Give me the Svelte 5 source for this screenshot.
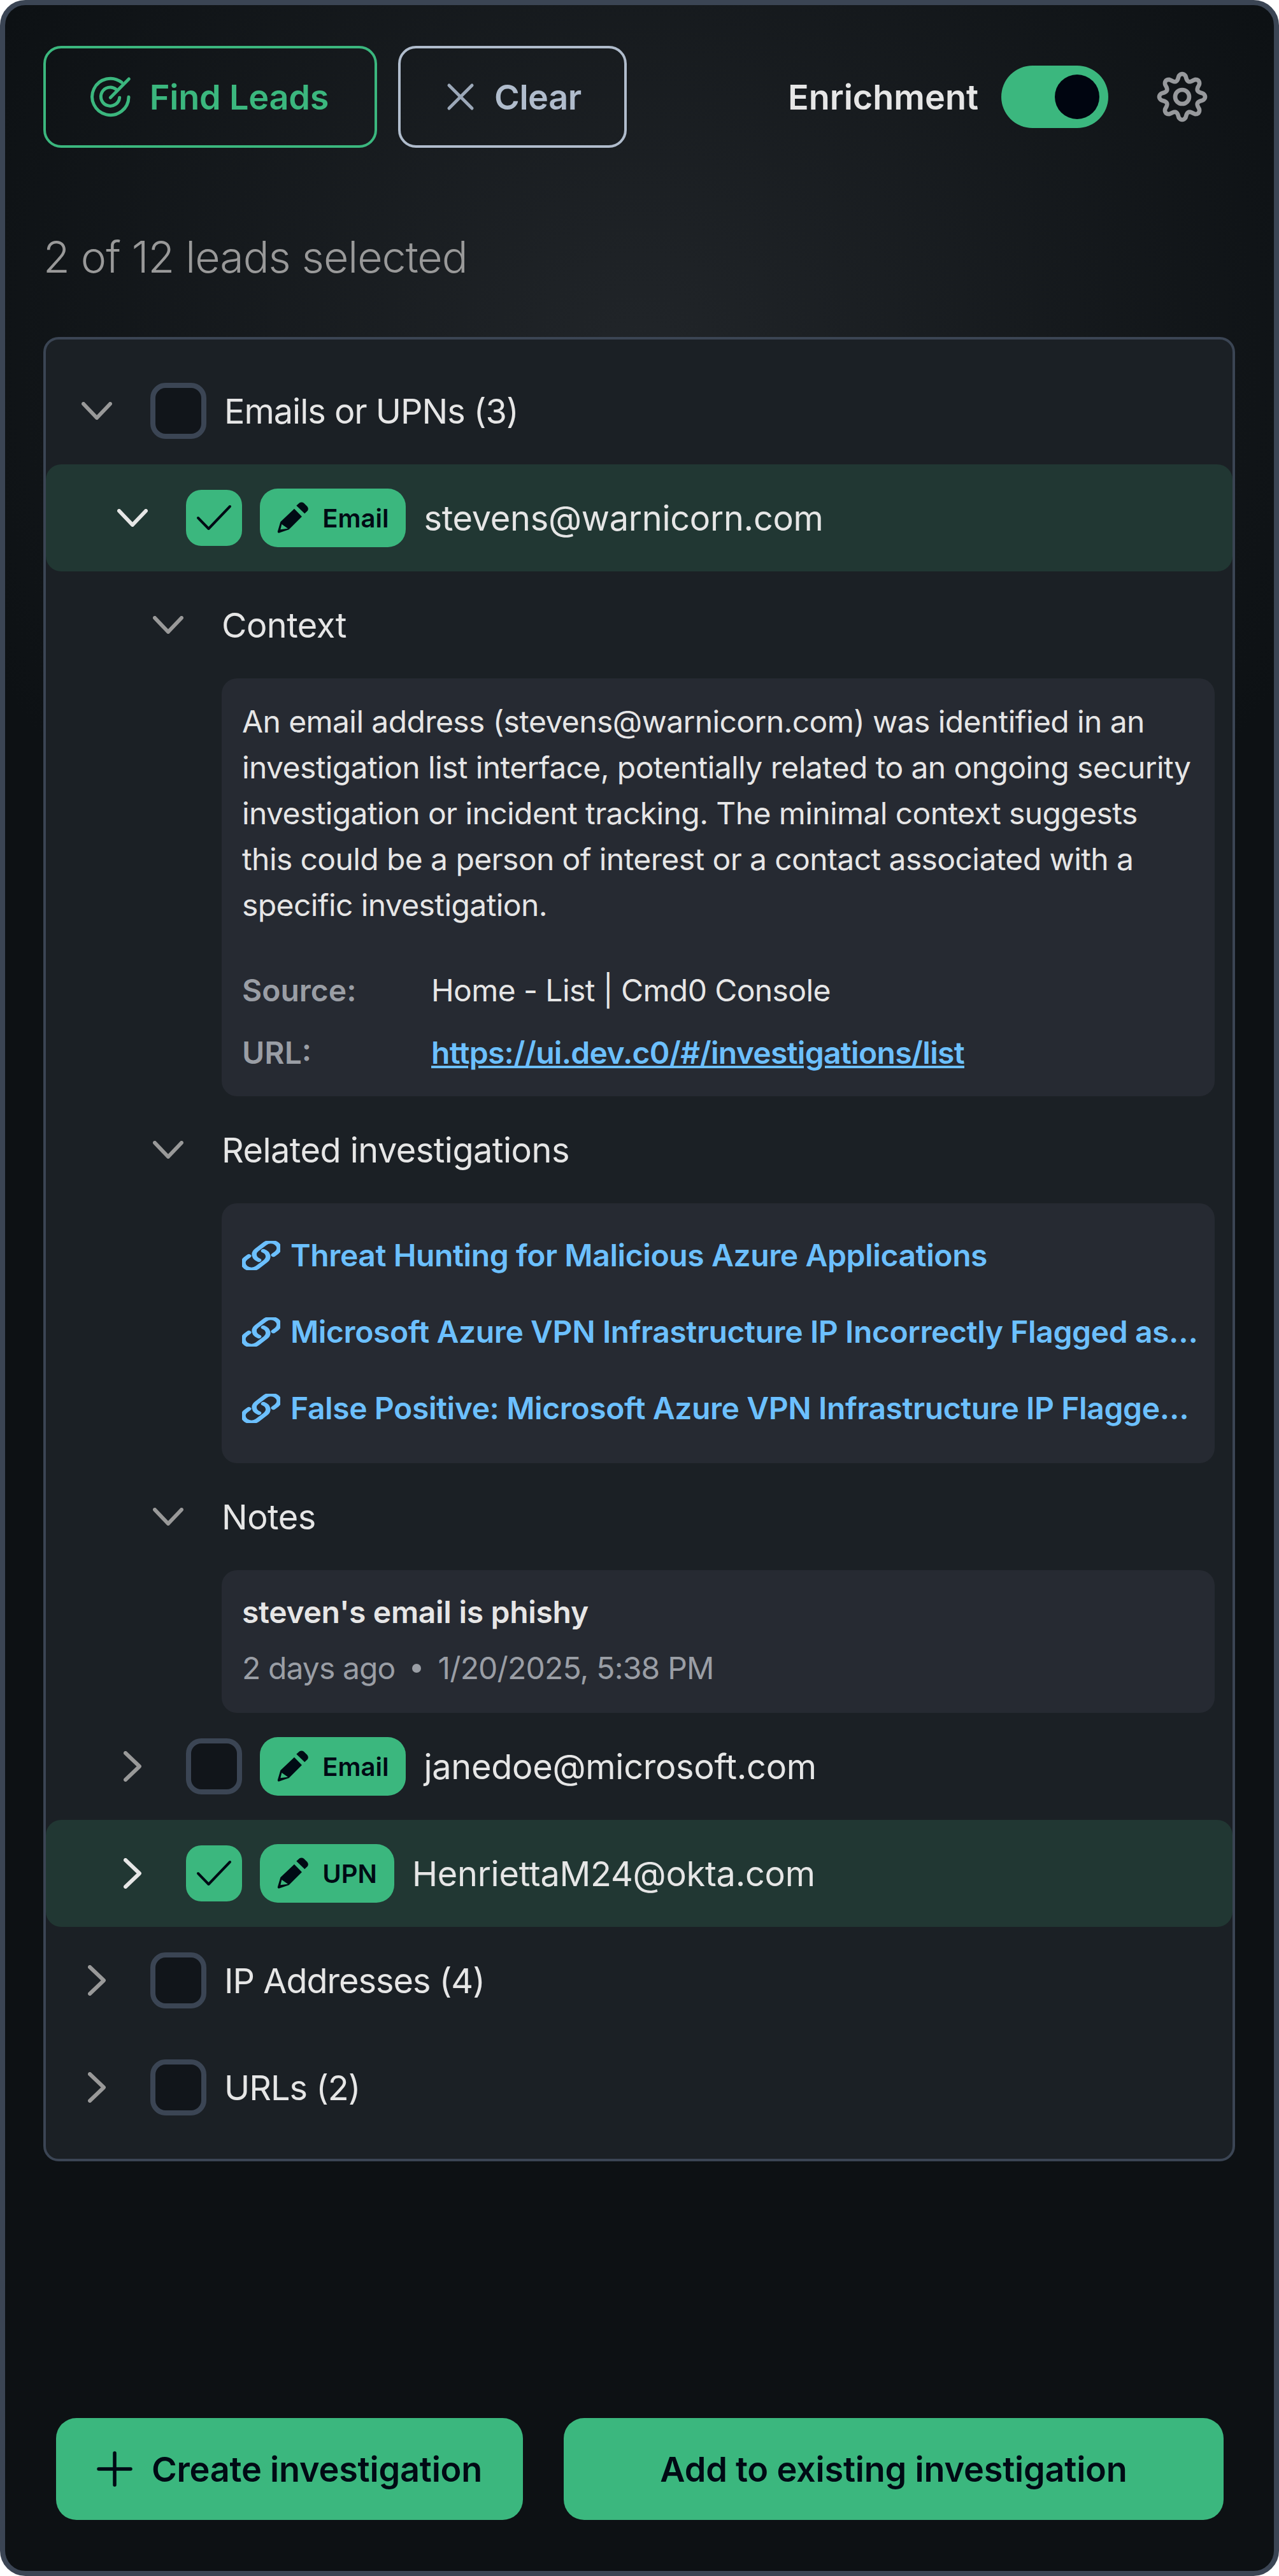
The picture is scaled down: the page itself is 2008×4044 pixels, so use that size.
<script>
  const links = [
    "Threat Hunting for Malicious Azure Applications",
    "Microsoft Azure VPN Infrastructure IP Incorrectly Flagged as Malicious",
    "False Positive: Microsoft Azure VPN Infrastructure IP Flagged as Suspicious"
  ];

  // gear outline: 8 rounded teeth around the centre
  function gearPath() {
    const pts = [];
    for (let i = 0; i < 160; i++) {
      const a = (i / 160) * Math.PI * 2;
      const c = Math.cos(a * 8);
      const shaped = Math.sign(c) * Math.pow(Math.abs(c), 0.7);
      const r = 93 + 15 * shaped;
      pts.push((138 + r * Math.cos(a)).toFixed(1) + " " + (138 + r * Math.sin(a)).toFixed(1));
    }
    return "M" + pts.join("L") + "Z";
  }
  const gear = gearPath();
</script>

{#snippet chevronDown()}
  <span class="chev">
    <svg width="48" height="28" viewBox="0 0 48 28" fill="none" stroke="currentColor" stroke-width="6" stroke-linecap="round" stroke-linejoin="round">
      <path d="M3 3 L24 25 L45 3" />
    </svg>
  </span>
{/snippet}

{#snippet chevronRight()}
  <span class="chev">
    <svg width="28" height="48" viewBox="0 0 28 48" fill="none" stroke="currentColor" stroke-width="6" stroke-linecap="round" stroke-linejoin="round">
      <path d="M3 3 L25 24 L3 45" />
    </svg>
  </span>
{/snippet}

{#snippet checkbox(checked)}
  <span class="box" class:checked>
    {#if checked}
      <svg width="88" height="88" viewBox="0 0 88 88" fill="none" stroke="#000a14" stroke-width="4" stroke-linecap="round" stroke-linejoin="round">
        <path d="M19 44 L35.5 61 L69 26" />
      </svg>
    {/if}
  </span>
{/snippet}

{#snippet badge(label)}
  <span class="badge">
    <svg width="53.3" height="53.3" viewBox="100 105 160 160" fill="#000a14" fill-rule="evenodd">
      <path d="M197 128 L212 115 Q222 110 232 116 L248 132 Q256 142 250 152 L236 166 Z" />
      <path d="M187 143 L223 180 L162 241 L114 257 Q107 256 109 249 L122 205 Z M128 216 L157 236 L122 241 Z" />
    </svg>
    {label}
  </span>
{/snippet}

{#snippet link()}
  <svg class="link-icon" width="60" height="46" viewBox="1.6 1.6 20.8 20.8" preserveAspectRatio="none" fill="none" stroke="currentColor" stroke-width="2.6" stroke-linecap="round" stroke-linejoin="round">
    <path d="M13.19 8.688a4.5 4.5 0 011.242 7.244l-4.5 4.5a4.5 4.5 0 01-6.364-6.364l1.757-1.757m13.35-.622l1.757-1.757a4.5 4.5 0 00-6.364-6.364l-4.5 4.5a4.5 4.5 0 001.242 7.244" />
  </svg>
{/snippet}

<div class="frame">
  <header class="toolbar">
    <button class="btn find">
      <svg width="66.7" height="66.7" viewBox="30 55 200 200" fill="none" stroke="currentColor" stroke-width="15" stroke-linecap="round">
        <path d="M183 86 A86 86 0 1 0 216 155" />
        <path d="M156 118 A44 44 0 1 0 173 158" />
        <path d="M130 158 L217 70" />
      </svg>
      Find Leads
    </button>
    <button class="btn clear">
      <svg width="56" height="56" viewBox="0 0 56 56" fill="none" stroke="#9ca8b8" stroke-width="5" stroke-linecap="round">
        <path d="M10 10 L46 46 M46 10 L10 46" />
      </svg>
      Clear
    </button>
    <span class="enrich">Enrichment</span>
    <span class="toggle"><span class="knob"></span></span>
    <svg class="gear" width="80" height="80" viewBox="18 18 240 240" fill="none" stroke="#97999c" stroke-width="20" stroke-linejoin="round">
      <path d={gear} />
      <circle cx="138" cy="138" r="33" />
    </svg>
  </header>

  <p class="count">2 of 12 leads selected</p>

  <section class="panel">
    <div class="row group">
      {@render chevronDown()}
      {@render checkbox(false)}
      <span class="label">Emails or UPNs (3)</span>
    </div>

    <div class="row lead selected">
      {@render chevronDown()}
      {@render checkbox(true)}
      {@render badge("Email")}
      <span class="label">stevens@warnicorn.com</span>
    </div>

    <div class="row sub">
      {@render chevronDown()}
      <span class="label">Context</span>
    </div>
    <div class="card context">
      <p class="desc">An email address (stevens@warnicorn.com) was identified in an investigation list interface, potentially related to an ongoing security investigation or incident tracking. The minimal context suggests this could be a person of interest or a contact associated with a specific investigation.</p>
      <div class="meta-row"><span class="key">Source:</span><span>Home - List | Cmd0 Console</span></div>
      <div class="meta-row"><span class="key">URL:</span><a class="url" href="#list">https://ui.dev.c0/#/investigations/list</a></div>
    </div>

    <div class="row sub">
      {@render chevronDown()}
      <span class="label">Related investigations</span>
    </div>
    <div class="card related">
      {#each links as title}
        <div class="related-item">
          {@render link()}
          <span class="related-title">{title}</span>
        </div>
      {/each}
    </div>

    <div class="row sub">
      {@render chevronDown()}
      <span class="label">Notes</span>
    </div>
    <div class="card notes">
      <div class="note">steven's email is phishy</div>
      <div class="note-meta"><span class="ago">2 days ago</span><span class="dot"></span><span class="date">1/20/2025, 5:38 PM</span></div>
    </div>

    <div class="row lead">
      {@render chevronRight()}
      {@render checkbox(false)}
      {@render badge("Email")}
      <span class="label">janedoe@microsoft.com</span>
    </div>

    <div class="row lead selected">
      {@render chevronRight()}
      {@render checkbox(true)}
      {@render badge("UPN")}
      <span class="label">HenriettaM24@okta.com</span>
    </div>

    <div class="row group">
      {@render chevronRight()}
      {@render checkbox(false)}
      <span class="label">IP Addresses (4)</span>
    </div>

    <div class="row group">
      {@render chevronRight()}
      {@render checkbox(false)}
      <span class="label">URLs (2)</span>
    </div>
  </section>

  <footer class="actions">
    <button class="primary create">
      <svg width="56" height="56" viewBox="0 0 56 56" fill="none" stroke="#000a14" stroke-width="5.5" stroke-linecap="round">
        <path d="M28 3 L28 53 M3 28 L53 28" />
      </svg>
      Create investigation
    </button>
    <button class="primary add">Add to existing investigation</button>
  </footer>
</div>

<style>
  :global(body) {
    background: #fff;
  }

  .frame {
    box-sizing: border-box;
    width: 2008px;
    height: 4044px;
    display: flex;
    flex-direction: column;
    border: 8px solid #3b4554;
    border-radius: 40px;
    background: radial-gradient(ellipse 1150px 1050px at 50% 550px, #212529 0%, #0d1114 100%);
    font-family: Inter, "Liberation Sans", sans-serif;
    font-size: 54px;
    color: #e6e6e6;
  }

  /* ===== TOOLBAR ===== */
  .toolbar {
    display: flex;
    align-items: center;
    padding: 64px 104px 0 60px;
  }

  button {
    font-family: inherit;
    font-size: 54px;
    font-weight: 600;
    letter-spacing: -0.2px;
    cursor: pointer;
  }

  .btn {
    box-sizing: border-box;
    height: 160px;
    display: flex;
    align-items: center;
    background: transparent;
    border-width: 4px;
    border-style: solid;
    border-radius: 28px;
  }

  .find {
    width: 524px;
    padding: 0 0 0 68px;
    gap: 28px;
    color: #3bb77e;
    border-color: #3bb77e;
  }

  .clear {
    width: 359px;
    margin-left: 33px;
    padding: 0 0 0 66px;
    gap: 25px;
    letter-spacing: -0.4px;
    color: #b0bccc;
    border-color: #b0bccc;
  }

  .enrich {
    margin-left: auto;
    font-weight: 600;
  }

  .toggle {
    box-sizing: border-box;
    width: 168px;
    height: 98px;
    margin: 0 76px 0 36px;
    padding: 14px;
    display: flex;
    justify-content: flex-end;
    border-radius: 49px;
    background: #3bb77e;
  }

  .knob {
    width: 70px;
    height: 70px;
    border-radius: 50%;
    background: #000510;
  }

  .count {
    margin: 131px 0 86px 60px;
    font-size: 68px;
    line-height: 80px;
    font-weight: 300;
    letter-spacing: -1px;
    color: #999;
  }

  /* ===== PANEL ===== */
  .panel {
    margin: 0 61px 0 60px;
    padding: 28px 0;
    border: 4px solid #3b4554;
    border-radius: 24px;
    background: #1b2025;
  }

  .row {
    height: 168px;
    display: flex;
    align-items: center;
    border-radius: 24px;
  }

  .group {
    padding-left: 48px;
  }

  .lead {
    padding-left: 104px;
  }

  .sub {
    padding-left: 160px;
  }

  .selected {
    background: #213733;
  }

  .chev {
    width: 64px;
    height: 64px;
    flex: none;
    display: flex;
    align-items: center;
    justify-content: center;
    color: #999;
  }

  .selected .chev {
    color: #e6e6e6;
  }

  .box {
    box-sizing: border-box;
    width: 88px;
    height: 88px;
    flex: none;
    margin-left: 52px;
    border: 8px solid #3b4554;
    border-radius: 24px;
    background: #11151a;
  }

  .box.checked {
    border: none;
    background: #3bb77e;
  }

  .box svg {
    display: block;
  }

  .group .label {
    margin-left: 28px;
    letter-spacing: -1px;
  }

  .lead .label {
    margin-left: 28px;
    letter-spacing: -0.25px;
  }

  .sub .label {
    margin-left: 52px;
    letter-spacing: -0.5px;
  }

  .badge {
    height: 92px;
    margin-left: 28px;
    padding: 0 27px 0 25px;
    display: flex;
    align-items: center;
    gap: 20px;
    border-radius: 28px;
    background: #3bb77e;
    color: #000a14;
    font-size: 40px;
    font-weight: 600;
  }

  /* ===== CARDS ===== */
  .card {
    margin: 0 28px 0 276px;
    border-radius: 24px;
    background: #262a32;
    font-size: 48px;
    line-height: 72px;
  }

  .context {
    padding: 32px 32px 32px;
    letter-spacing: -0.6px;
  }

  .desc {
    margin: 0 0 62px;
  }

  .meta-row {
    display: flex;
    margin-top: 26px;
  }

  .key {
    width: 297px;
    flex: none;
    font-weight: 600;
    letter-spacing: 0;
    color: #9a9ea5;
  }

  .url {
    color: #6cc0ff;
    font-weight: 600;
    letter-spacing: -0.7px;
  }

  .related {
    padding: 22px 22px 26px 32px;
  }

  .related-item {
    height: 120px;
    display: flex;
    align-items: center;
    gap: 16px;
    color: #6cc0ff;
    font-weight: 600;
    letter-spacing: -0.4px;
  }

  .link-icon {
    flex: none;
  }

  .related-title {
    min-width: 0;
    white-space: nowrap;
    overflow: hidden;
    text-overflow: ellipsis;
  }

  .notes {
    padding: 30px 32px 34px;
  }

  .note {
    font-weight: 600;
    letter-spacing: -0.3px;
    margin-bottom: 16px;
  }

  .note-meta {
    display: flex;
    align-items: center;
    color: #9a9ea5;
  }

  .ago {
    letter-spacing: -0.9px;
  }

  .date {
    letter-spacing: -0.8px;
  }

  .dot {
    width: 14px;
    height: 14px;
    margin: 0 26px 0 27px;
    border-radius: 50%;
    background: #9a9ea5;
  }

  /* ===== FOOTER ===== */
  .actions {
    margin: auto 79px 80px 80px;
    display: flex;
    gap: 64px;
  }

  .primary {
    height: 160px;
    display: flex;
    align-items: center;
    justify-content: center;
    border: none;
    border-radius: 32px;
    background: #3bb77e;
    color: #000a14;
  }

  .create {
    flex: 0 0 733px;
    gap: 30px;
  }

  .add {
    flex: 1;
  }
</style>
